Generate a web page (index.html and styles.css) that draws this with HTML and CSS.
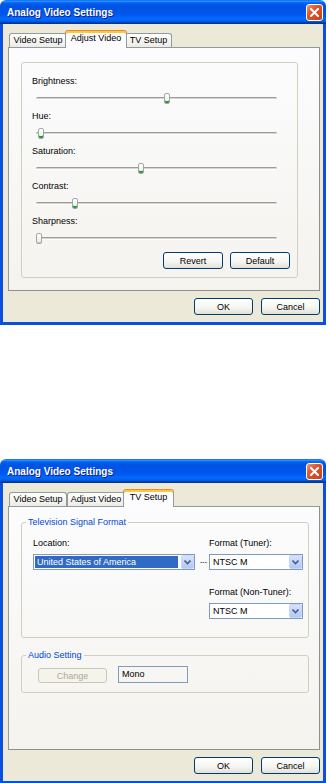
FILE: index.html
```html
<!DOCTYPE html>
<html lang="en">
<head>
  <meta charset="UTF-8">
  <meta name="viewport" content="width=device-width, initial-scale=1.0">
  <link rel="stylesheet" href="styles.css">
</head>
<body>
  <!-- Adjust Video tab -->
  <div class="dialog">
    <div class="title-bar">
      <div class="window-title">Analog Video Settings</div>
      <div class="close-button">
        <svg width="9" height="9" viewBox="0 0 9 9"><path d="M1 1L8 8M8 1L1 8" stroke="#fff" stroke-width="2" stroke-linecap="square"/></svg>
      </div>
    </div>
    <div class="frame">
      <div class="tabs">
        <div class="tab tab-video">Video Setup</div>
        <div class="tab tab-adjust active">Adjust Video</div>
        <div class="tab tab-tv">TV Setup</div>
      </div>
      <div class="tab-panel panel-adjust">
        <div class="group group-sliders">
          <div class="slider-item">
            <div class="label">Brightness:</div>
            <div class="slider"><div class="track"></div><div class="thumb" style="left: 128px"></div></div>
          </div>
          <div class="slider-item">
            <div class="label">Hue:</div>
            <div class="slider"><div class="track"></div><div class="thumb" style="left: 2px"></div></div>
          </div>
          <div class="slider-item">
            <div class="label">Saturation:</div>
            <div class="slider"><div class="track"></div><div class="thumb" style="left: 102px"></div></div>
          </div>
          <div class="slider-item">
            <div class="label">Contrast:</div>
            <div class="slider"><div class="track"></div><div class="thumb" style="left: 36px"></div></div>
          </div>
          <div class="slider-item">
            <div class="label">Sharpness:</div>
            <div class="slider"><div class="track"></div><div class="thumb thumb-off" style="left: 0px"></div></div>
          </div>
          <div class="group-buttons">
            <button class="button">Revert</button>
            <button class="button">Default</button>
          </div>
        </div>
      </div>
      <div class="dialog-buttons">
        <button class="button button-main">OK</button>
        <button class="button button-main">Cancel</button>
      </div>
    </div>
  </div>

  <!-- TV Setup tab -->
  <div class="dialog">
    <div class="title-bar">
      <div class="window-title">Analog Video Settings</div>
      <div class="close-button">
        <svg width="9" height="9" viewBox="0 0 9 9"><path d="M1 1L8 8M8 1L1 8" stroke="#fff" stroke-width="2" stroke-linecap="square"/></svg>
      </div>
    </div>
    <div class="frame">
      <div class="tabs">
        <div class="tab tab-video">Video Setup</div>
        <div class="tab tab-adjust">Adjust Video</div>
        <div class="tab tab-tv active">TV Setup</div>
      </div>
      <div class="tab-panel panel-tv">
        <fieldset class="group group-format">
          <legend>Television Signal Format</legend>
          <div class="format-row">
            <div class="format-col col-location">
              <div class="label">Location:</div>
              <div class="combo">
                <span class="combo-text selected">United States of America</span>
                <span class="combo-arrow"><svg width="7" height="5" viewBox="0 0 7 5"><path d="M0.5 0.5L3.5 3.5L6.5 0.5" fill="none" stroke="#4d6185" stroke-width="1.6"/></svg></span>
              </div>
            </div>
            <div class="dash">---</div>
            <div class="format-col col-format">
              <div class="label">Format (Tuner):</div>
              <div class="combo">
                <span class="combo-text">NTSC M</span>
                <span class="combo-arrow"><svg width="7" height="5" viewBox="0 0 7 5"><path d="M0.5 0.5L3.5 3.5L6.5 0.5" fill="none" stroke="#4d6185" stroke-width="1.6"/></svg></span>
              </div>
              <div class="label label-next">Format (Non-Tuner):</div>
              <div class="combo">
                <span class="combo-text">NTSC M</span>
                <span class="combo-arrow"><svg width="7" height="5" viewBox="0 0 7 5"><path d="M0.5 0.5L3.5 3.5L6.5 0.5" fill="none" stroke="#4d6185" stroke-width="1.6"/></svg></span>
              </div>
            </div>
          </div>
        </fieldset>
        <fieldset class="group group-audio">
          <legend>Audio Setting</legend>
          <div class="audio-row">
            <button class="button button-disabled" disabled>Change</button>
            <div class="audio-box">Mono</div>
          </div>
        </fieldset>
      </div>
      <div class="dialog-buttons">
        <button class="button button-main">OK</button>
        <button class="button button-main">Cancel</button>
      </div>
    </div>
  </div>
</body>
</html>
```

FILE: styles.css
```css
html, body {
  margin: 0;
  overflow: hidden; /* no scrollbar */
}

body {
  background-color: #ffffff;
  font-family: 'Liberation Sans', Arial, sans-serif;
  font-size: 9px;
  color: #000;
}

.dialog {
  width: 326px;
  height: 325px;
  display: flex;
  flex-direction: column;
}

.dialog + .dialog {
  margin-top: 134px;
}

/* XP blue title bar */
.title-bar {
  flex: none;
  height: 24px;
  display: flex;
  align-items: center;
  justify-content: space-between;
  padding: 0 3px 0 7px;
  border-radius: 6px 6px 0 0;
  background: linear-gradient(to bottom, #0058ee 0%, #3593ff 4%, #288eff 6%, #127dff 8%, #036ffc 10%, #0262ee 14%, #0057e5 20%, #0054e3 24%, #0055eb 56%, #005bf5 66%, #026afe 76%, #0062ef 86%, #0052d6 92%, #0040ab 94%, #003092 100%);
}

.window-title {
  color: #fff;
  font-weight: bold;
  font-size: 10px;
  text-shadow: 1px 1px 0 #0a1e8c;
}

.close-button {
  box-sizing: border-box;
  width: 17px;
  height: 17px;
  border: 1px solid #fff;
  border-radius: 3px;
  background: linear-gradient(135deg, #f09a7a 0%, #e2582f 35%, #c8401a 100%);
  display: flex;
  align-items: center;
  justify-content: center;
}

.frame {
  flex: 1;
  display: flex;
  flex-direction: column;
  background-color: #ece9d8;
  border: 3px solid #0a4fe0;
  border-top: 0;
}

/* tabs */
.tabs {
  flex: none;
  height: 23px;
  display: flex;
  align-items: flex-end;
  padding-left: 6px;
}

.tab {
  box-sizing: border-box;
  height: 14px;
  border: 1px solid #919b9c;
  border-bottom: 0;
  border-radius: 3px 3px 0 0;
  background: linear-gradient(to bottom, #ffffff, #ecebe6);
  text-align: center;
  line-height: 13px;
  position: relative;
}

.tab-video { width: 58px; }
.tab-adjust { width: 58px; }
.tab-tv { width: 47px; }

.tab.active {
  height: 18px;
  margin: 0 -2px -1px;
  width: auto;
  padding: 0 2px;
  line-height: 14px;
  z-index: 1;
  background: #fcfcfe;
  border-top: 1px solid #e68b2c;
  box-shadow: inset 0 2px 0 #ffc83c;
}

.tab-adjust.active { min-width: 62px; }
.tab-tv.active { min-width: 51px; }

.tab-panel {
  box-sizing: border-box;
  flex: none;
  width: 312px;
  height: 244px;
  margin-left: 5px;
  border: 1px solid #919b9c;
  border-right-color: #8c9091;
  border-bottom-color: #8c9091;
  background: linear-gradient(to bottom, #fcfcfe, #f4f3ee);
  padding: 14px 0 0 12px;
}

.panel-tv {
  padding-top: 10px;
}

.group {
  box-sizing: border-box;
  border: 1px solid #d0d0bf;
  border-radius: 3px;
  margin: 0;
  padding: 0;
  min-width: 0;
}

.label {
  height: 11px;
  line-height: 11px;
  white-space: nowrap;
}

/* sliders */
.group-sliders {
  width: 277px;
  padding: 13px 7px 8px 10px;
}

.slider {
  position: relative;
  width: 241px;
  height: 24px;
  margin-left: 4px;
  padding-top: 10px;
  box-sizing: border-box;
}

.track {
  height: 3px;
  box-sizing: border-box;
  border-top: 1px solid #9d9c99;
  border-bottom: 1px solid #ffffff;
  background-color: #d6d4cc;
  border-radius: 2px;
}

.thumb {
  position: absolute;
  top: 6px;
  box-sizing: border-box;
  width: 6px;
  height: 11px;
  border: 1px solid #9fa6ad;
  border-radius: 2px;
  background: linear-gradient(to bottom, #ffffff, #ebebe6);
  box-shadow: inset 0 -2px 0 #21a121;
}

.thumb-off {
  box-shadow: inset 0 -1px 0 #c9c7ba;
}

.group-buttons {
  display: flex;
  justify-content: flex-end;
  gap: 7px;
  margin-top: 1px;
}

.button {
  box-sizing: border-box;
  width: 60px;
  height: 17px;
  padding: 0;
  border: 1px solid #003c74;
  border-radius: 3px;
  background: linear-gradient(to bottom, #ffffff 0%, #f4f4f0 60%, #e3e0d6 100%);
  font-family: inherit;
  font-size: 9px;
  color: #000;
}

.dialog-buttons {
  display: flex;
  justify-content: flex-end;
  gap: 8px;
  padding: 7px 3px 0 0;
}

.button-main {
  width: 59px;
}

/* TV setup */
.group legend {
  color: #0046d5;
  padding: 0 2px;
  margin-left: 4px;
  line-height: 11px;
}

.group-format {
  width: 288px;
  padding-bottom: 18px;
}

.format-row {
  display: flex;
  margin: 10px 0 0 11px;
}

.col-location {
  width: 162px;
}

.col-format {
  width: 94px;
}

.dash {
  width: 14px;
  margin-top: 16px;
  line-height: 16px;
  padding-left: 5px;
  box-sizing: border-box;
  font-size: 7px;
}

.combo {
  box-sizing: border-box;
  height: 16px;
  margin-top: 5px;
  display: flex;
  border: 1px solid #7f9db9;
  background-color: #fff;
}

.combo-text {
  flex: 1;
  line-height: 14px;
  padding-left: 3px;
  white-space: nowrap;
}

.combo-text.selected {
  background-color: #316ac5;
  color: #fff;
  margin: 1px 3px 1px 1px;
  line-height: 12px;
  padding-left: 2px;
}

.combo-arrow {
  box-sizing: border-box;
  width: 13px;
  height: 14px;
  border: 1px solid #c5d6fc;
  border-radius: 2px;
  background: linear-gradient(to bottom, #d6e3fe, #b4c8f6);
  display: flex;
  align-items: center;
  justify-content: center;
}

.label-next {
  margin-top: 17px;
}

.group-audio {
  width: 288px;
  margin-top: 12px;
  padding-bottom: 9px;
}

.audio-row {
  display: flex;
  align-items: flex-end;
  gap: 11px;
  margin: 5px 0 0 16px;
}

.button-disabled {
  width: 69px;
  height: 15px;
  border-color: #c9c7ba;
  background: #f5f4ea;
  color: #aca899;
}

.audio-box {
  box-sizing: border-box;
  width: 70px;
  height: 17px;
  border: 1px solid #7f9db9;
  padding-left: 3px;
  line-height: 15px;
}
```
